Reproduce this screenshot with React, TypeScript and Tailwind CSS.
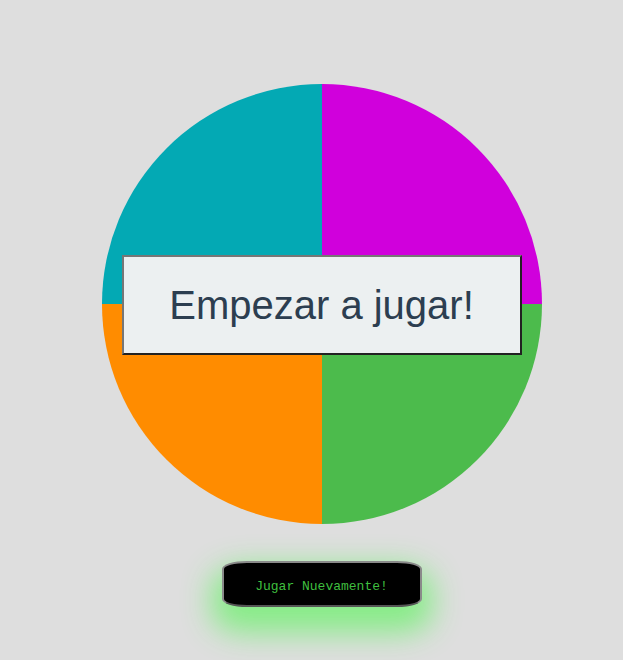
import React from 'react';

const App: React.FC = () => {
  return (
    <div className="min-h-[660px] w-full bg-[#dedede] flex flex-col items-center pt-[84px] pl-[20px]" style={{ fontFamily: '"Liberation Sans", Arial, sans-serif' }}>
      <div className="relative w-[440px] h-[440px]">
        {/* wheel */}
        <div className="grid grid-cols-2 grid-rows-2 w-full h-full rounded-full overflow-hidden">
          <div className="bg-[#03a9b4]" />
          <div className="bg-[#d000dc]" />
          <div className="bg-[#ff8c00]" />
          <div className="bg-[#4cbb4c]" />
        </div>
        <button className="absolute left-[20px] top-[171px] w-[400px] h-[100px] bg-[#ecf0f1] text-[#2c3e50] text-[40px] border-2 border-t-[#767676] border-l-[#767676] border-r-[#222] border-b-[#222]">
          Empezar a jugar!
        </button>
      </div>
      <button
        className="mt-[37px] w-[200px] h-[46px] pt-[6px] bg-black text-[#3fbf3f] text-[13px] border-2 border-[#8a8a8a] border-b-[#555] rounded-[25px/8px] shadow-[0_16px_30px_10px_#88ec88]"
        style={{ fontFamily: '"Liberation Mono", "Courier New", monospace' }}
      >
        Jugar Nuevamente!
      </button>
    </div>
  );
};

export default App;
